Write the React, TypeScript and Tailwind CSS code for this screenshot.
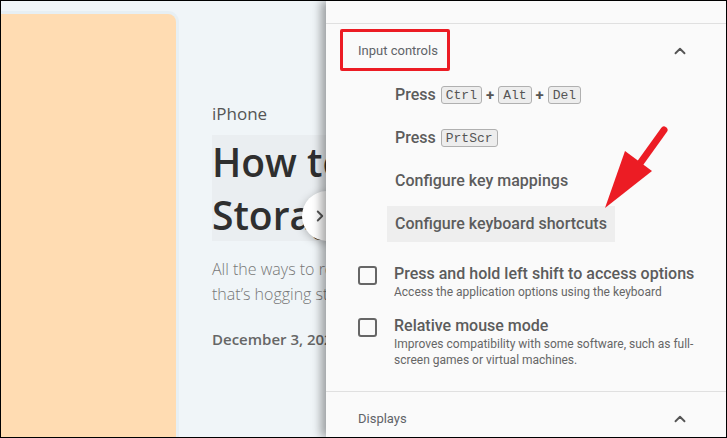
import { ChevronRight, ChevronUp } from "lucide-react";

const panelFont = { fontFamily: "Roboto, 'Noto Sans', sans-serif" };
const articleFont = { fontFamily: "'Open Sans', Lato, sans-serif" };

function Kbd({ children }: { children: string }) {
  return (
    <span
      className="inline-flex h-[18px] items-center rounded-[3px] border border-[#b0b0b0] bg-[#ededed] px-[4px] text-[13px] leading-none text-[#555]"
      style={{ fontFamily: "'Liberation Mono', monospace" }}
    >
      {children}
    </span>
  );
}

function Plus() {
  return <span className="mx-[4px] text-[15px] font-bold text-[#555]">+</span>;
}

function MenuRow({
  children,
  active,
}: {
  children: React.ReactNode;
  active?: boolean;
}) {
  return (
    <div
      className={
        "flex h-[36px] w-fit shrink-0 items-center px-2 text-[16px] font-medium text-[#5c5c5c] " +
        (active ? "bg-[#eeeeee]" : "")
      }
    >
      {children}
    </div>
  );
}

function CheckRow({ title, sub }: { title: string; sub: string }) {
  return (
    <div className="flex shrink-0 items-start">
      <div className="mt-[2px] h-[19px] w-[19px] shrink-0 rounded-[3px] border-2 border-[#666]" />
      <div className="ml-[17px] max-w-[310px]">
        <div className="text-[16px] font-medium leading-[20px] text-[#5c5c5c]">
          {title}
        </div>
        <div className="text-[12px] leading-[16px] text-[#666]">{sub}</div>
      </div>
    </div>
  );
}

function Arrow() {
  return (
    <svg
      className="absolute left-[270px] top-[120px]"
      width="90"
      height="100"
      viewBox="0 0 90 100"
    >
      <line
        x1="68"
        y1="9"
        x2="40"
        y2="48"
        stroke="#ec1c24"
        strokeWidth="7"
        strokeLinecap="round"
      />
      <polygon points="9,87 29,30 56,50" fill="#ec1c24" />
    </svg>
  );
}

export default function App() {
  return (
    <div className="flex h-[438px] w-[727px] overflow-hidden border border-black bg-[#f0f5f8]">
      {/* article behind the drawer */}
      <div className="relative flex w-[325px] shrink-0 overflow-hidden" style={articleFont}>
        <div className="-ml-2 mt-[13px] h-[440px] w-[183px] shrink-0 rounded-lg bg-[#ffdcb2] shadow-[0_0_0_3px_#e7eff3]" />
        <div className="ml-[36px] mt-[101px] shrink-0 whitespace-nowrap">
          <div className="text-[17px] leading-[24px] text-[#555]">iPhone</div>
          <div className="mt-[9px] text-[39px] font-semibold leading-[53px] text-[#2f2f2f]">
            <div className="w-fit bg-[#eaeef1] pr-2">How to Clear System Data</div>
            <div className="w-fit bg-[#eaeef1] pr-2">Storage on iPhone</div>
          </div>
          <div className="mt-[16px] text-[16px] font-light leading-[25px] text-[#777]">
            <div>All the ways to remove the System Data</div>
            <div>that’s hogging storage on your iPhone</div>
          </div>
          <div className="mt-[21px] text-[15px] font-semibold text-[#666]">
            December 3, 2022
          </div>
        </div>
        <div className="absolute left-[301px] top-[190px] flex h-[50px] w-[50px] items-center rounded-full bg-white pl-[9px] shadow-[0_2px_8px_rgba(0,0,0,0.25)]">
          <ChevronRight className="h-[18px] w-[18px] text-[#555]" strokeWidth={2.5} />
        </div>
      </div>

      {/* settings drawer */}
      <div
        className="relative flex w-[400px] shrink-0 flex-col bg-[#fafafa] shadow-[-5px_0_9px_rgba(0,0,0,0.35)]"
        style={panelFont}
      >
        <div className="h-[23px] shrink-0 border-b border-[#e0e0e0]" />

        <div className="relative flex h-[53px] shrink-0 items-center justify-between pl-[32px] pr-[37px]">
          <span className="text-[13px] text-[#5f6368]">Input controls</span>
          <ChevronUp className="h-[18px] w-[18px] text-[#555]" strokeWidth={2.5} />
          <div className="absolute left-[14px] top-[5px] h-[42px] w-[110px] rounded-[2px] border-[3px] border-[#ec1c24]" />
        </div>

        <div className="flex shrink-0 flex-col gap-[7px] pl-[61px]">
          <MenuRow>
            <span className="mr-[5px]">Press</span>
            <Kbd>Ctrl</Kbd>
            <Plus />
            <Kbd>Alt</Kbd>
            <Plus />
            <Kbd>Del</Kbd>
          </MenuRow>
          <MenuRow>
            <span className="mr-[5px]">Press</span>
            <Kbd>PrtScr</Kbd>
          </MenuRow>
          <MenuRow>Configure key mappings</MenuRow>
          <MenuRow active>Configure keyboard shortcuts</MenuRow>
        </div>

        <div className="mt-[22px] flex shrink-0 flex-col gap-[16px] pl-[32px]">
          <CheckRow
            title="Press and hold left shift to access options"
            sub="Access the application options using the keyboard"
          />
          <CheckRow
            title="Relative mouse mode"
            sub="Improves compatibility with some software, such as full-screen games or virtual machines."
          />
        </div>

        <div className="mt-[23px] shrink-0 border-b border-[#e0e0e0]" />
        <div className="flex h-[53px] shrink-0 items-center justify-between pl-[32px] pr-[37px]">
          <span className="text-[13px] text-[#5f6368]">Displays</span>
          <ChevronUp className="h-[18px] w-[18px] text-[#555]" strokeWidth={2.5} />
        </div>

        <Arrow />
      </div>
    </div>
  );
}
